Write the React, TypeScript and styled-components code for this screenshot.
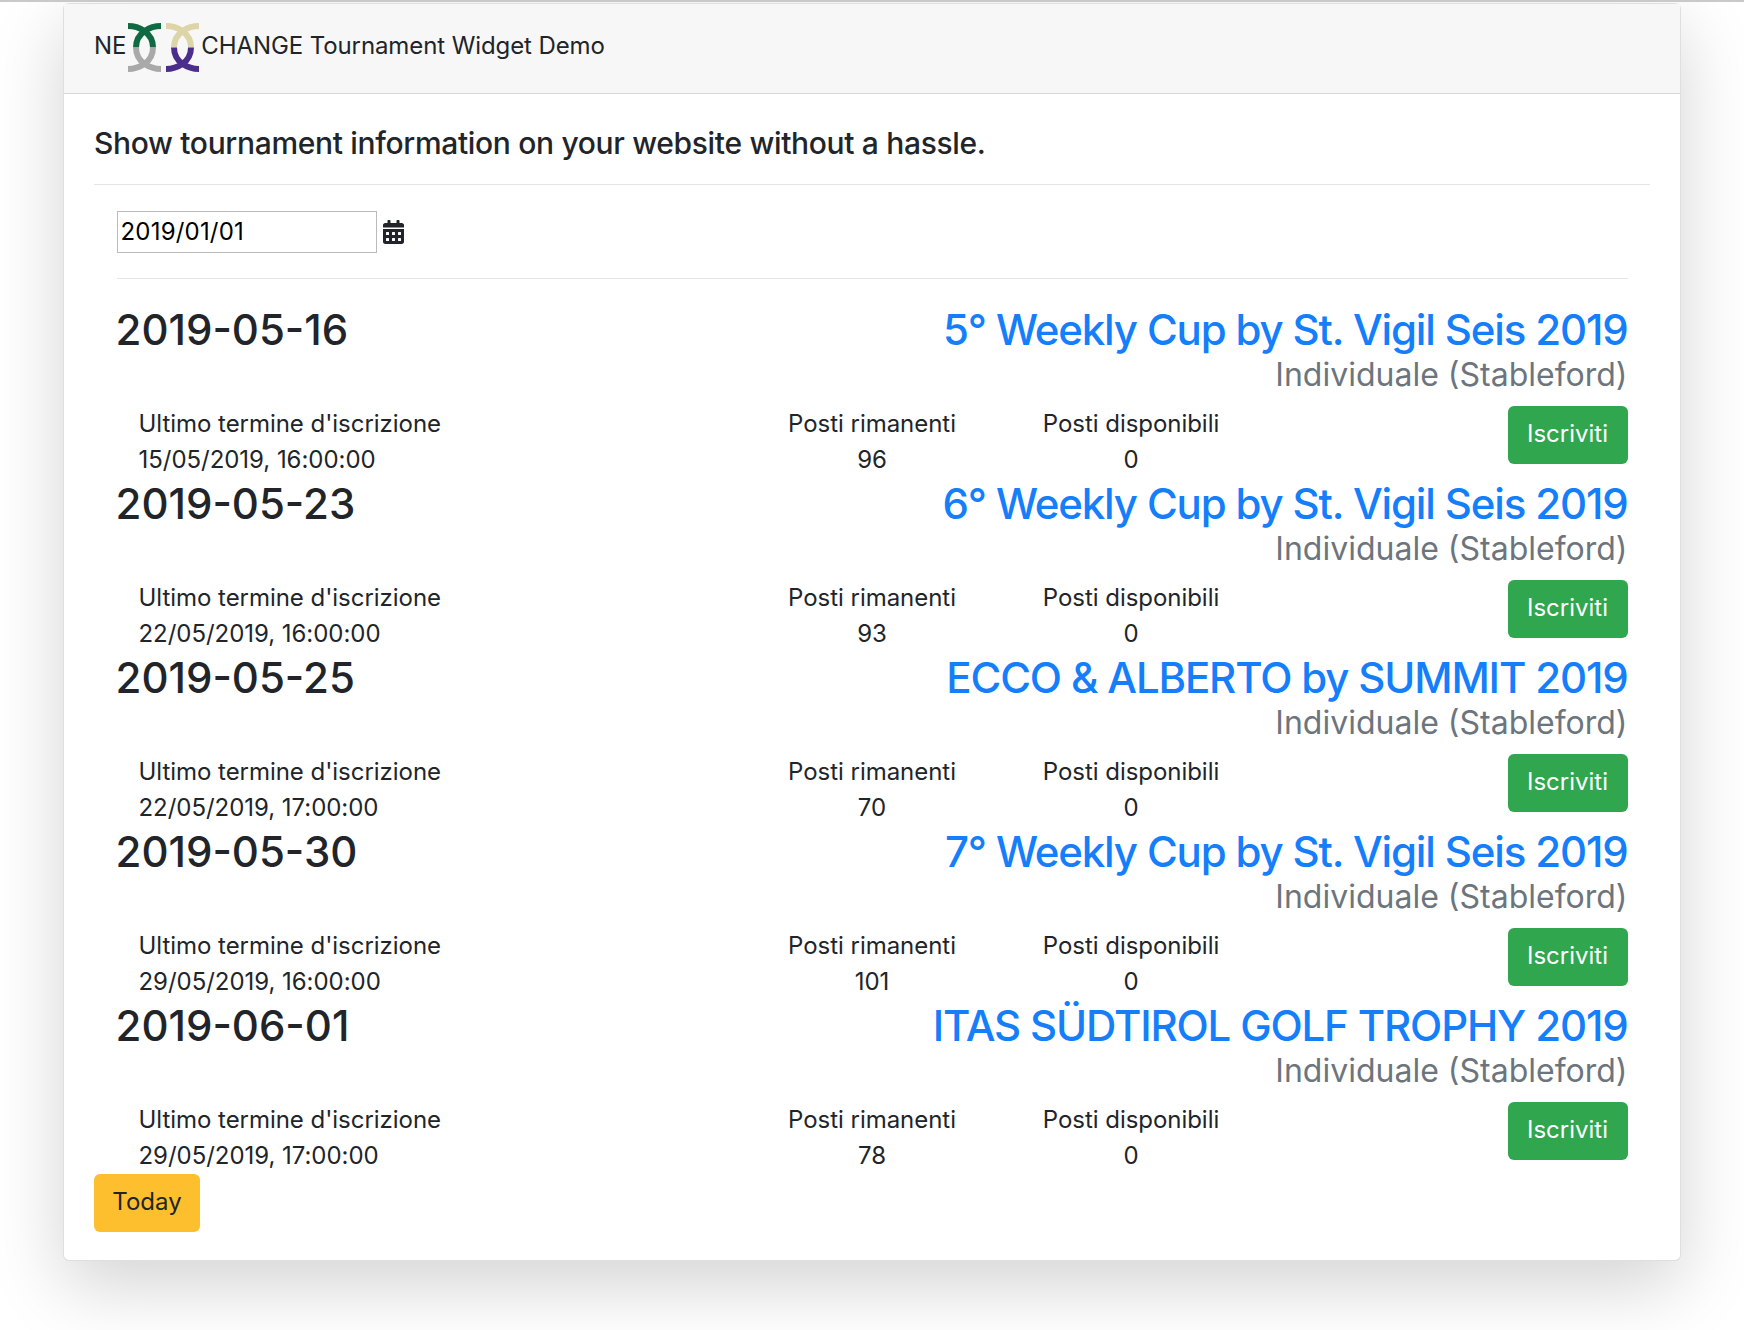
import React from "react";
import styled, { createGlobalStyle } from "styled-components";
import { FaCalendarAlt } from "react-icons/fa";

const GlobalStyle = createGlobalStyle`
  html, body {
    margin: 0;
    background: #fff;
  }
  body {
    font-family: Inter, "Noto Sans", "Liberation Sans", sans-serif;
    font-size: 24px;
    line-height: 36px;
    color: #212529;
  }
`;

const Page = styled.div`
  height: 1330px;
  padding: 1px 63px 0;
  box-sizing: border-box;
  border-top: 2px solid #c9c9c9;
  overflow: hidden;
`;

const Card = styled.div`
  background: #fff;
  border: 1.5px solid rgba(0, 0, 0, 0.125);
  border-radius: 6px;
  box-shadow: 0 24px 72px rgba(0, 0, 0, 0.175);
`;

const CardHeader = styled.div`
  height: 90px;
  box-sizing: border-box;
  padding: 0 30px 6px;
  display: flex;
  align-items: center;
  background: #f7f7f7;
  border-bottom: 1.5px solid rgba(0, 0, 0, 0.125);
  font-size: 24px;
  letter-spacing: -0.1px;
`;

const Logo = styled.svg`
  width: 71px;
  height: 49px;
  margin: 4px 2px 0 2px;
  flex: none;
`;

const CardBody = styled.div`
  padding: 31px 30px 28px;
`;

const Lead = styled.div`
  font-size: 30px;
  line-height: 36px;
  font-weight: 500;
  letter-spacing: -0.33px;
  padding-bottom: 23px;
  border-bottom: 1.5px solid rgba(0, 0, 0, 0.1);
`;

const Widget = styled.div`
  padding: 26px 22.5px 0;
`;

const DateBar = styled.div`
  display: flex;
  align-items: center;
  gap: 6px;
  padding-bottom: 25px;
  border-bottom: 1.5px solid rgba(0, 0, 0, 0.1);
  margin-bottom: 24px;
  svg {
    width: 21px;
    height: 24px;
    color: #212529;
  }
`;

const DateInput = styled.input`
  width: 260px;
  height: 42px;
  box-sizing: border-box;
  padding: 0 3px 2px;
  border: 1px solid #bbb;
  font: inherit;
  letter-spacing: 0.2px;
  color: #000;
  outline: none;
`;

const Entry = styled.div`
  height: 174px;
`;

const EntryHead = styled.div`
  height: 102px;
  padding-top: 2px;
  box-sizing: border-box;
  display: flex;
  justify-content: space-between;
  align-items: flex-start;
`;

const EntryDate = styled.div`
  margin-left: -1px;
  font-size: 42px;
  line-height: 50px;
  font-weight: 500;
`;

const EntryTitle = styled.div`
  text-align: right;
`;

const TitleLink = styled.a`
  display: block;
  font-size: 42px;
  line-height: 50px;
  font-weight: 500;
  letter-spacing: -1.15px;
  color: #147efb;
  text-decoration: none;
`;

const TitleType = styled.div`
  font-size: 32px;
  line-height: 39px;
  color: #6c757d;
`;

const EntryDetails = styled.div`
  display: grid;
  grid-template-columns: 626px 259px 259px 1fr;
  letter-spacing: -0.04px;
`;

const Deadline = styled.div`
  padding: 1px 0 0 22px;
`;

const Count = styled.div`
  padding-top: 1px;
  text-align: center;
`;

const Button = styled.button<{ $variant: "success" | "warning" }>`
  height: 58px;
  padding: 0 18px 2px;
  border: 0;
  border-radius: 6px;
  font: inherit;
  cursor: pointer;
  background: ${(p) => (p.$variant === "success" ? "#30a64e" : "#fdbf2d")};
  color: ${(p) => (p.$variant === "success" ? "#fff" : "#212529")};
`;

const SignUp = styled(Button)`
  justify-self: end;
  width: 120px;
  margin-top: 1px;
`;

const TodayButton = styled(Button)`
  display: block;
  width: 106px;
  margin: 1px 0 0;
`;

const entries = [
  { date: "2019-05-16", title: "5° Weekly Cup by St. Vigil Seis 2019", deadline: "15/05/2019, 16:00:00", left: 96 },
  { date: "2019-05-23", title: "6° Weekly Cup by St. Vigil Seis 2019", deadline: "22/05/2019, 16:00:00", left: 93 },
  { date: "2019-05-25", title: "ECCO & ALBERTO by SUMMIT 2019", deadline: "22/05/2019, 17:00:00", left: 70 },
  { date: "2019-05-30", title: "7° Weekly Cup by St. Vigil Seis 2019", deadline: "29/05/2019, 16:00:00", left: 101 },
  { date: "2019-06-01", title: "ITAS SÜDTIROL GOLF TROPHY 2019", deadline: "29/05/2019, 17:00:00", left: 78 },
];

const LogoMark = ({ top, bottom, x }: { top: string; bottom: string; x: number }) => (
  <g transform={`translate(${x} 0)`} fill="none" strokeWidth="6">
    <path d="M0 3 C10 3 25 9 25 24.5" stroke={top} />
    <path d="M33 3 C23 3 8 9 8 24.5" stroke={top} />
    <path d="M0 46 C10 46 25 40 25 24.5" stroke={bottom} />
    <path d="M33 46 C23 46 8 40 8 24.5" stroke={bottom} />
  </g>
);

export default function App() {
  return (
    <>
      <GlobalStyle />
      <Page>
        <Card>
          <CardHeader>
            NE
            <Logo viewBox="0 0 71 49">
              <LogoMark x={0} top="#0f6a41" bottom="#a9a9a9" />
              <LogoMark x={38} top="#ddd4a8" bottom="#4b2e8c" />
            </Logo>
            CHANGE Tournament Widget Demo
          </CardHeader>
          <CardBody>
            <Lead>Show tournament information on your website without a hassle.</Lead>
            <Widget>
              <DateBar>
                <DateInput defaultValue="2019/01/01" />
                <FaCalendarAlt />
              </DateBar>
              {entries.map((e) => (
                <Entry key={e.date}>
                  <EntryHead>
                    <EntryDate>{e.date}</EntryDate>
                    <EntryTitle>
                      <TitleLink href="#">{e.title}</TitleLink>
                      <TitleType>Individuale (Stableford)</TitleType>
                    </EntryTitle>
                  </EntryHead>
                  <EntryDetails>
                    <Deadline>
                      Ultimo termine d'iscrizione
                      <br />
                      {e.deadline}
                    </Deadline>
                    <Count>
                      Posti rimanenti
                      <br />
                      {e.left}
                    </Count>
                    <Count>
                      Posti disponibili
                      <br />0
                    </Count>
                    <SignUp $variant="success">Iscriviti</SignUp>
                  </EntryDetails>
                </Entry>
              ))}
            </Widget>
            <TodayButton $variant="warning">Today</TodayButton>
          </CardBody>
        </Card>
      </Page>
    </>
  );
}
